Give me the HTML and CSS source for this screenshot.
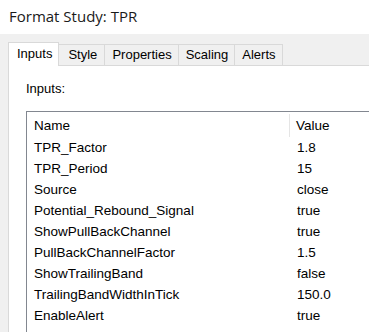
FILE: index.html
```html
<!DOCTYPE html>
<html lang="en">
<head>
  <meta charset="UTF-8" />
  <title>Format Study: TPR</title>
  <link rel="stylesheet" href="styles.css">
</head>
<body>
  <div class="titlebar">Format Study: TPR</div>
  <div class="dialog">
    <div class="tabs">
      <div class="tab active">Inputs</div>
      <div class="tab wide">Style</div>
      <div class="tab">Properties</div>
      <div class="tab">Scaling</div>
      <div class="tab">Alerts</div>
    </div>
    <div class="panel">
      <div class="label">Inputs:</div>
      <div class="list">
        <div class="row head"><span class="name">Name</span><span class="value">Value</span></div>
        <div class="row"><span class="name">TPR_Factor</span><span class="value">1.8</span></div>
        <div class="row"><span class="name">TPR_Period</span><span class="value">15</span></div>
        <div class="row"><span class="name">Source</span><span class="value">close</span></div>
        <div class="row"><span class="name">Potential_Rebound_Signal</span><span class="value">true</span></div>
        <div class="row"><span class="name">ShowPullBackChannel</span><span class="value">true</span></div>
        <div class="row"><span class="name">PullBackChannelFactor</span><span class="value">1.5</span></div>
        <div class="row"><span class="name">ShowTrailingBand</span><span class="value">false</span></div>
        <div class="row"><span class="name">TrailingBandWidthInTick</span><span class="value">150.0</span></div>
        <div class="row"><span class="name">EnableAlert</span><span class="value">true</span></div>
      </div>
    </div>
  </div>
</body>
</html>
```

FILE: styles.css
```css
* { box-sizing: border-box; }
body {
  margin: 0;
  font-family: "Liberation Sans", Arial, sans-serif;
  font-size: 13px;
  color: #000;
  background: #f0f0f0;
  overflow: hidden;
  height: 332px;
}
.titlebar {
  height: 34px;
  background: #fff;
  padding: 6px 0 0 9px;
  font-family: "Open Sans", sans-serif;
  font-size: 15px;
  color: #1a1a1a;
}
.dialog {
  padding: 8px 0 0 8px;
}
.tabs {
  display: flex;
  align-items: flex-end;
  height: 23px;
}
.tab {
  height: 21px;
  padding: 2px 6px 0 7px;
  border: 1px solid #d9d9d9;
  border-bottom: none;
  border-left: none;
  background: #f0f0f0;
}
.tab.wide {
  min-width: 46px;
  padding-left: 9px;
}
.tab.active {
  height: 24px;
  background: #fff;
  border-left: 1px solid #d9d9d9;
  padding: 3px 6px 0 8px;
  margin-bottom: -1px;
  position: relative;
  z-index: 1;
}
.panel {
  background: #fff;
  border-top: 1px solid #d9d9d9;
  border-left: 1px solid #d9d9d9;
  height: 267px;
  padding: 15px 0 0 17px;
}
.label {
  height: 30px;
}
.list {
  border: 1px solid #828790;
  border-right: none;
  border-bottom: none;
  padding-top: 2px;
  height: 222px;
  font-size: 13.5px;
}
.row {
  display: flex;
  height: 21px;
  align-items: center;
}
.row.head {
  height: 23px;
}
.name {
  width: 263px;
  padding-left: 7px;
}
.head .name {
  border-right: 1px solid #e5e5e5;
  height: 23px;
  line-height: 23px;
}
.value {
  padding-left: 7px;
}
.head .value {
  padding-left: 6px;
}
```
